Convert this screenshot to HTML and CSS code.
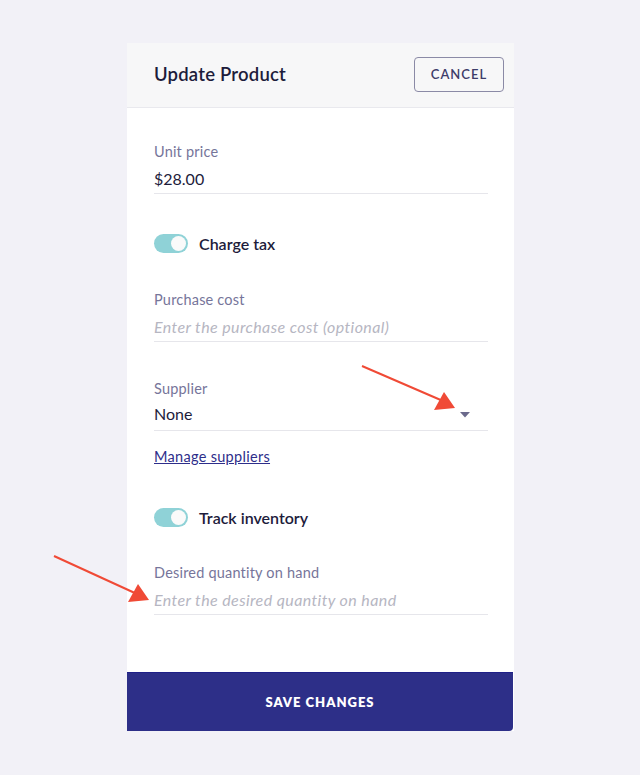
FILE: index.html
```html
<!DOCTYPE html>
<html lang="en">
<head>
<meta charset="utf-8">
<title>Update Product</title>
<link rel="stylesheet" href="styles.css">
</head>
<body>
<div class="page">
  <div class="card">
    <header class="card-header">
      <h1 class="title">Update Product</h1>
      <button class="btn-cancel" type="button">CANCEL</button>
    </header>
    <div class="card-body">
      <div class="field">
        <label class="field-label">Unit price</label>
        <div class="field-input">$28.00</div>
      </div>
      <div class="toggle-row">
        <span class="toggle"><span class="knob"></span></span>
        <span class="toggle-label">Charge tax</span>
      </div>
      <div class="field">
        <label class="field-label">Purchase cost</label>
        <div class="field-input placeholder">Enter the purchase cost (optional)</div>
      </div>
      <div class="field">
        <label class="field-label">Supplier</label>
        <div class="field-input select">
          <span>None</span>
          <svg class="caret" width="10" height="6" viewBox="0 0 10 6"><path d="M0 0H10L5 5.5Z" fill="#6b6a8c"/></svg>
        </div>
      </div>
      <a class="link" href="#">Manage suppliers</a>
      <div class="toggle-row toggle-row-2">
        <span class="toggle"><span class="knob"></span></span>
        <span class="toggle-label">Track inventory</span>
      </div>
      <div class="field">
        <label class="field-label">Desired quantity on hand</label>
        <div class="field-input placeholder">Enter the desired quantity on hand</div>
      </div>
    </div>
    <button class="btn-save" type="button">SAVE CHANGES</button>
  </div>
  <svg class="annotations" width="640" height="775" viewBox="0 0 640 775">
    <line x1="362" y1="366" x2="443" y2="401" stroke="#f04a36" stroke-width="2"/>
    <path d="M455 408 L434 410 L444 392 Z" fill="#f04a36"/>
    <line x1="54" y1="556" x2="137" y2="594" stroke="#f04a36" stroke-width="2"/>
    <path d="M149 600 L128 602 L138 584 Z" fill="#f04a36"/>
  </svg>
</div>
</body>
</html>
```
FILE: styles.css
```css
* { box-sizing: border-box; }
html, body {
  margin: 0;
  padding: 0;
  background: #f2f1f7;
}
body {
  font-family: "Lato", "Noto Sans", sans-serif;
  color: #1d1c3b;
}
.page {
  position: relative;
  width: 640px;
  height: 775px;
  padding-top: 43px;
}
.card {
  width: 387px;
  margin: 0 0 0 127px;
  background: #ffffff;
  display: flex;
  flex-direction: column;
}
.card-header {
  height: 65px;
  background: #f7f7f8;
  border-bottom: 1px solid #e9e9ee;
  display: flex;
  align-items: center;
  justify-content: space-between;
  padding: 0 10px 0 27px;
}
.title {
  margin: 0;
  font-size: 18.5px;
  font-weight: 600;
  color: #1d1c3b;
  letter-spacing: 0.2px;
  margin-top: -2px;
}
.btn-cancel {
  width: 90px;
  height: 35px;
  border: 1.5px solid #8b8aa6;
  border-radius: 4px;
  background: transparent;
  font-family: inherit;
  font-size: 13px;
  font-weight: 600;
  letter-spacing: 1px;
  color: #3d3c69;
  padding: 0;
  margin-top: -2px;
}
.card-body {
  padding: 35px 26px 57px 27px;
  display: flex;
  flex-direction: column;
}
.field {
  display: flex;
  flex-direction: column;
  border-bottom: 1px solid #e6e6eb;
  padding-bottom: 2px;
}
.field-label {
  font-size: 14.5px;
  line-height: 18px;
  letter-spacing: 0.2px;
  color: #76759a;
}
.field-input {
  margin-top: 6px;
  font-size: 16px;
  line-height: 24px;
  color: #1d1c3b;
}
.field-input.placeholder {
  font-style: italic;
  color: #b6b6c2;
  letter-spacing: 0.4px;
}
.field-input.select {
  display: flex;
  align-items: center;
  justify-content: space-between;
  padding-right: 18px;
  height: 24px;
  margin-top: 4px;
  margin-bottom: 2px;
}
.caret { display: block; margin-top: 2px; }
.toggle-row {
  display: flex;
  align-items: center;
  gap: 11px;
  height: 20px;
  margin: 39px 0 38px;
}
.toggle-row-2 { margin: 41px 0 37px; }
.toggle {
  width: 34px;
  height: 19px;
  border-radius: 10px;
  background: #8fd2d7;
  position: relative;
  display: inline-block;
}
.knob {
  position: absolute;
  right: 2px;
  top: 2px;
  width: 15px;
  height: 15px;
  border-radius: 50%;
  background: #fafafa;
}
.toggle-label {
  font-size: 16px;
  font-weight: 600;
  color: #1d1c3b;
}
.field + .field { margin-top: 38px; }
.link {
  margin-top: 17px;
  font-size: 14.5px;
  line-height: 18px;
  letter-spacing: 0.3px;
  color: #2e2e8a;
  text-decoration: underline;
  align-self: flex-start;
}
.btn-save {
  height: 59px;
  border: none;
  border-top: 1px solid #1f2088;
  background: #2d2f88;
  color: #ffffff;
  font-family: inherit;
  font-size: 13px;
  font-weight: 800;
  letter-spacing: 1px;
  border-radius: 0 0 4px 0;
  width: 386px;
}
.annotations {
  position: absolute;
  left: 0;
  top: 0;
  pointer-events: none;
}
```
